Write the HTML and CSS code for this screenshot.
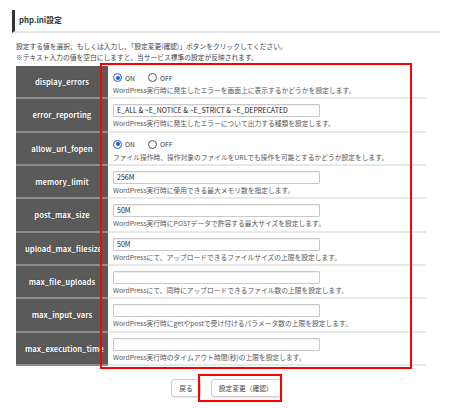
FILE: index.html
```html
<!DOCTYPE html>
<html lang="ja">
<head>
<meta charset="utf-8">
<title>php.ini設定</title>
<link rel="stylesheet" href="styles.css">
</head>
<body>
<div class="page">
  <h1 class="title">php.ini設定</h1>
  <p class="intro">設定する値を選択、もしくは入力し、「設定変更(確認)」ボタンをクリックしてください。<br>※テキスト入力の値を空白にしますと、当サービス標準の設定が反映されます。</p>
  <div class="table">
    <div class="row">
      <div class="label">display_errors</div>
      <div class="value">
        <div class="radios"><span class="radio on"></span><span class="rlabel">ON</span><span class="radio"></span><span class="rlabel">OFF</span></div>
        <div class="desc">WordPress実行時に発生したエラーを画面上に表示するかどうかを設定します。</div>
      </div>
    </div>
    <div class="row">
      <div class="label">error_reporting</div>
      <div class="value">
        <div class="input">E_ALL &amp; ~E_NOTICE &amp; ~E_STRICT &amp; ~E_DEPRECATED</div>
        <div class="desc">WordPress実行時に発生したエラーについて出力する種類を設定します。</div>
      </div>
    </div>
    <div class="row">
      <div class="label">allow_url_fopen</div>
      <div class="value">
        <div class="radios"><span class="radio on"></span><span class="rlabel">ON</span><span class="radio"></span><span class="rlabel">OFF</span></div>
        <div class="desc">ファイル操作時、操作対象のファイルをURLでも操作を可能とするかどうか設定をします。</div>
      </div>
    </div>
    <div class="row">
      <div class="label">memory_limit</div>
      <div class="value">
        <div class="input">256M</div>
        <div class="desc">WordPress実行時に使用できる最大メモリ数を指定します。</div>
      </div>
    </div>
    <div class="row">
      <div class="label">post_max_size</div>
      <div class="value">
        <div class="input">50M</div>
        <div class="desc">WordPress実行時にPOSTデータで許容する最大サイズを設定します。</div>
      </div>
    </div>
    <div class="row">
      <div class="label">upload_max_filesize</div>
      <div class="value">
        <div class="input">50M</div>
        <div class="desc">WordPressにて、アップロードできるファイルサイズの上限を設定します。</div>
      </div>
    </div>
    <div class="row">
      <div class="label">max_file_uploads</div>
      <div class="value">
        <div class="input"></div>
        <div class="desc">WordPressにて、同時にアップロードできるファイル数の上限を設定します。</div>
      </div>
    </div>
    <div class="row">
      <div class="label">max_input_vars</div>
      <div class="value">
        <div class="input"></div>
        <div class="desc">WordPress実行時にgetやpostで受け付けるパラメータ数の上限を設定します。</div>
      </div>
    </div>
    <div class="row">
      <div class="label">max_execution_time</div>
      <div class="value">
        <div class="input"></div>
        <div class="desc">WordPress実行時のタイムアウト時間(秒)の上限を設定します。</div>
      </div>
    </div>
    <div class="mark mark-table"></div>
  </div>
  <div class="buttons">
    <span class="btn">戻る</span>
    <span class="btn">設定変更（確認）</span>
    <div class="mark mark-btn"></div>
  </div>
</div>
</body>
</html>
```
FILE: styles.css
```css
* { box-sizing: border-box; }
html, body { margin: 0; padding: 0; background: #fff; }
body {
  font-family: "Noto Sans CJK JP", "Noto Sans", sans-serif;
  color: #444;
  width: 450px;
  height: 408px;
  overflow: hidden;
}
.page { padding: 10px 10px 0 12px; }
.title {
  margin: 0;
  height: 23px;
  border-left: 3px solid #333;
  border-bottom: 2px solid #e6e6e6;
  padding-left: 4px;
  font-size: 7.8px;
  font-weight: bold;
  line-height: 20px;
  color: #333;
}
.intro {
  margin: 8px 0 0 4px;
  font-size: 6.75px;
  line-height: 11px;
  color: #444;
}
.table {
  position: relative;
  margin: 3px 2px 0 4px;
  width: 410px;
}
.row {
  display: grid;
  grid-template-columns: 92px 1fr;
  height: 33.33px;
  border-bottom: 2px solid #e8e8e8;
}
.row:last-of-type { border-bottom: none; }
.label {
  background: #5a5a5a;
  color: #fff;
  font-weight: bold;
  font-size: 7.6px;
  white-space: nowrap;
  overflow: hidden;
  padding: 0 9px;
  display: flex;
  align-items: center;
  justify-content: safe center;
  text-shadow: 0 0 1px #222;
  margin-bottom: -2px;
  border-bottom: 2px solid #8c8c8c;
}
.row:last-of-type .label { margin-bottom: 0; border-bottom: none; }
.value {
  padding: 5px 0 0 5px;
  display: flex;
  flex-direction: column;
}
.radios {
  display: flex;
  align-items: center;
  height: 13px;
  font-size: 6.75px;
  color: #333;
}
.radio {
  width: 9px;
  height: 9px;
  border: 1px solid #555;
  border-radius: 50%;
  background: #fff;
  margin-right: 3px;
  position: relative;
}
.radio.on { border-color: #1a5fc9; }
.radio.on::after {
  content: "";
  position: absolute;
  left: 1.5px; top: 1.5px;
  width: 4px; height: 4px;
  border-radius: 50%;
  background: #1a5fc9;
}
.rlabel { margin-right: 13px; }
.input {
  width: 207px;
  height: 13px;
  border: 1px solid #c8c8c8;
  border-radius: 1px;
  font-size: 7px;
  line-height: 11px;
  padding-left: 3px;
  color: #222;
  box-shadow: inset 0 1px 1px #eee;
}
.desc {
  margin-top: 1px;
  font-size: 6.75px;
  line-height: 10px;
  color: #555;
  white-space: nowrap;
}
.mark {
  position: absolute;
  border: 2px solid #f00;
  pointer-events: none;
}
.mark-table { left: 84px; top: -3px; width: 312px; height: 306px; }
.buttons {
  position: relative;
  display: flex;
  justify-content: center;
  gap: 10px;
  margin-top: 13px;
}
.btn {
  height: 18px;
  padding: 0 7px;
  border: 1px solid #d0d0d0;
  border-radius: 3px;
  background: #fff;
  font-size: 6.75px;
  line-height: 16px;
  color: #444;
  box-shadow: 0 1px 1px #e4e4e4;
}
.mark-btn { left: 186px; top: -5px; width: 84px; height: 28px; }
```
